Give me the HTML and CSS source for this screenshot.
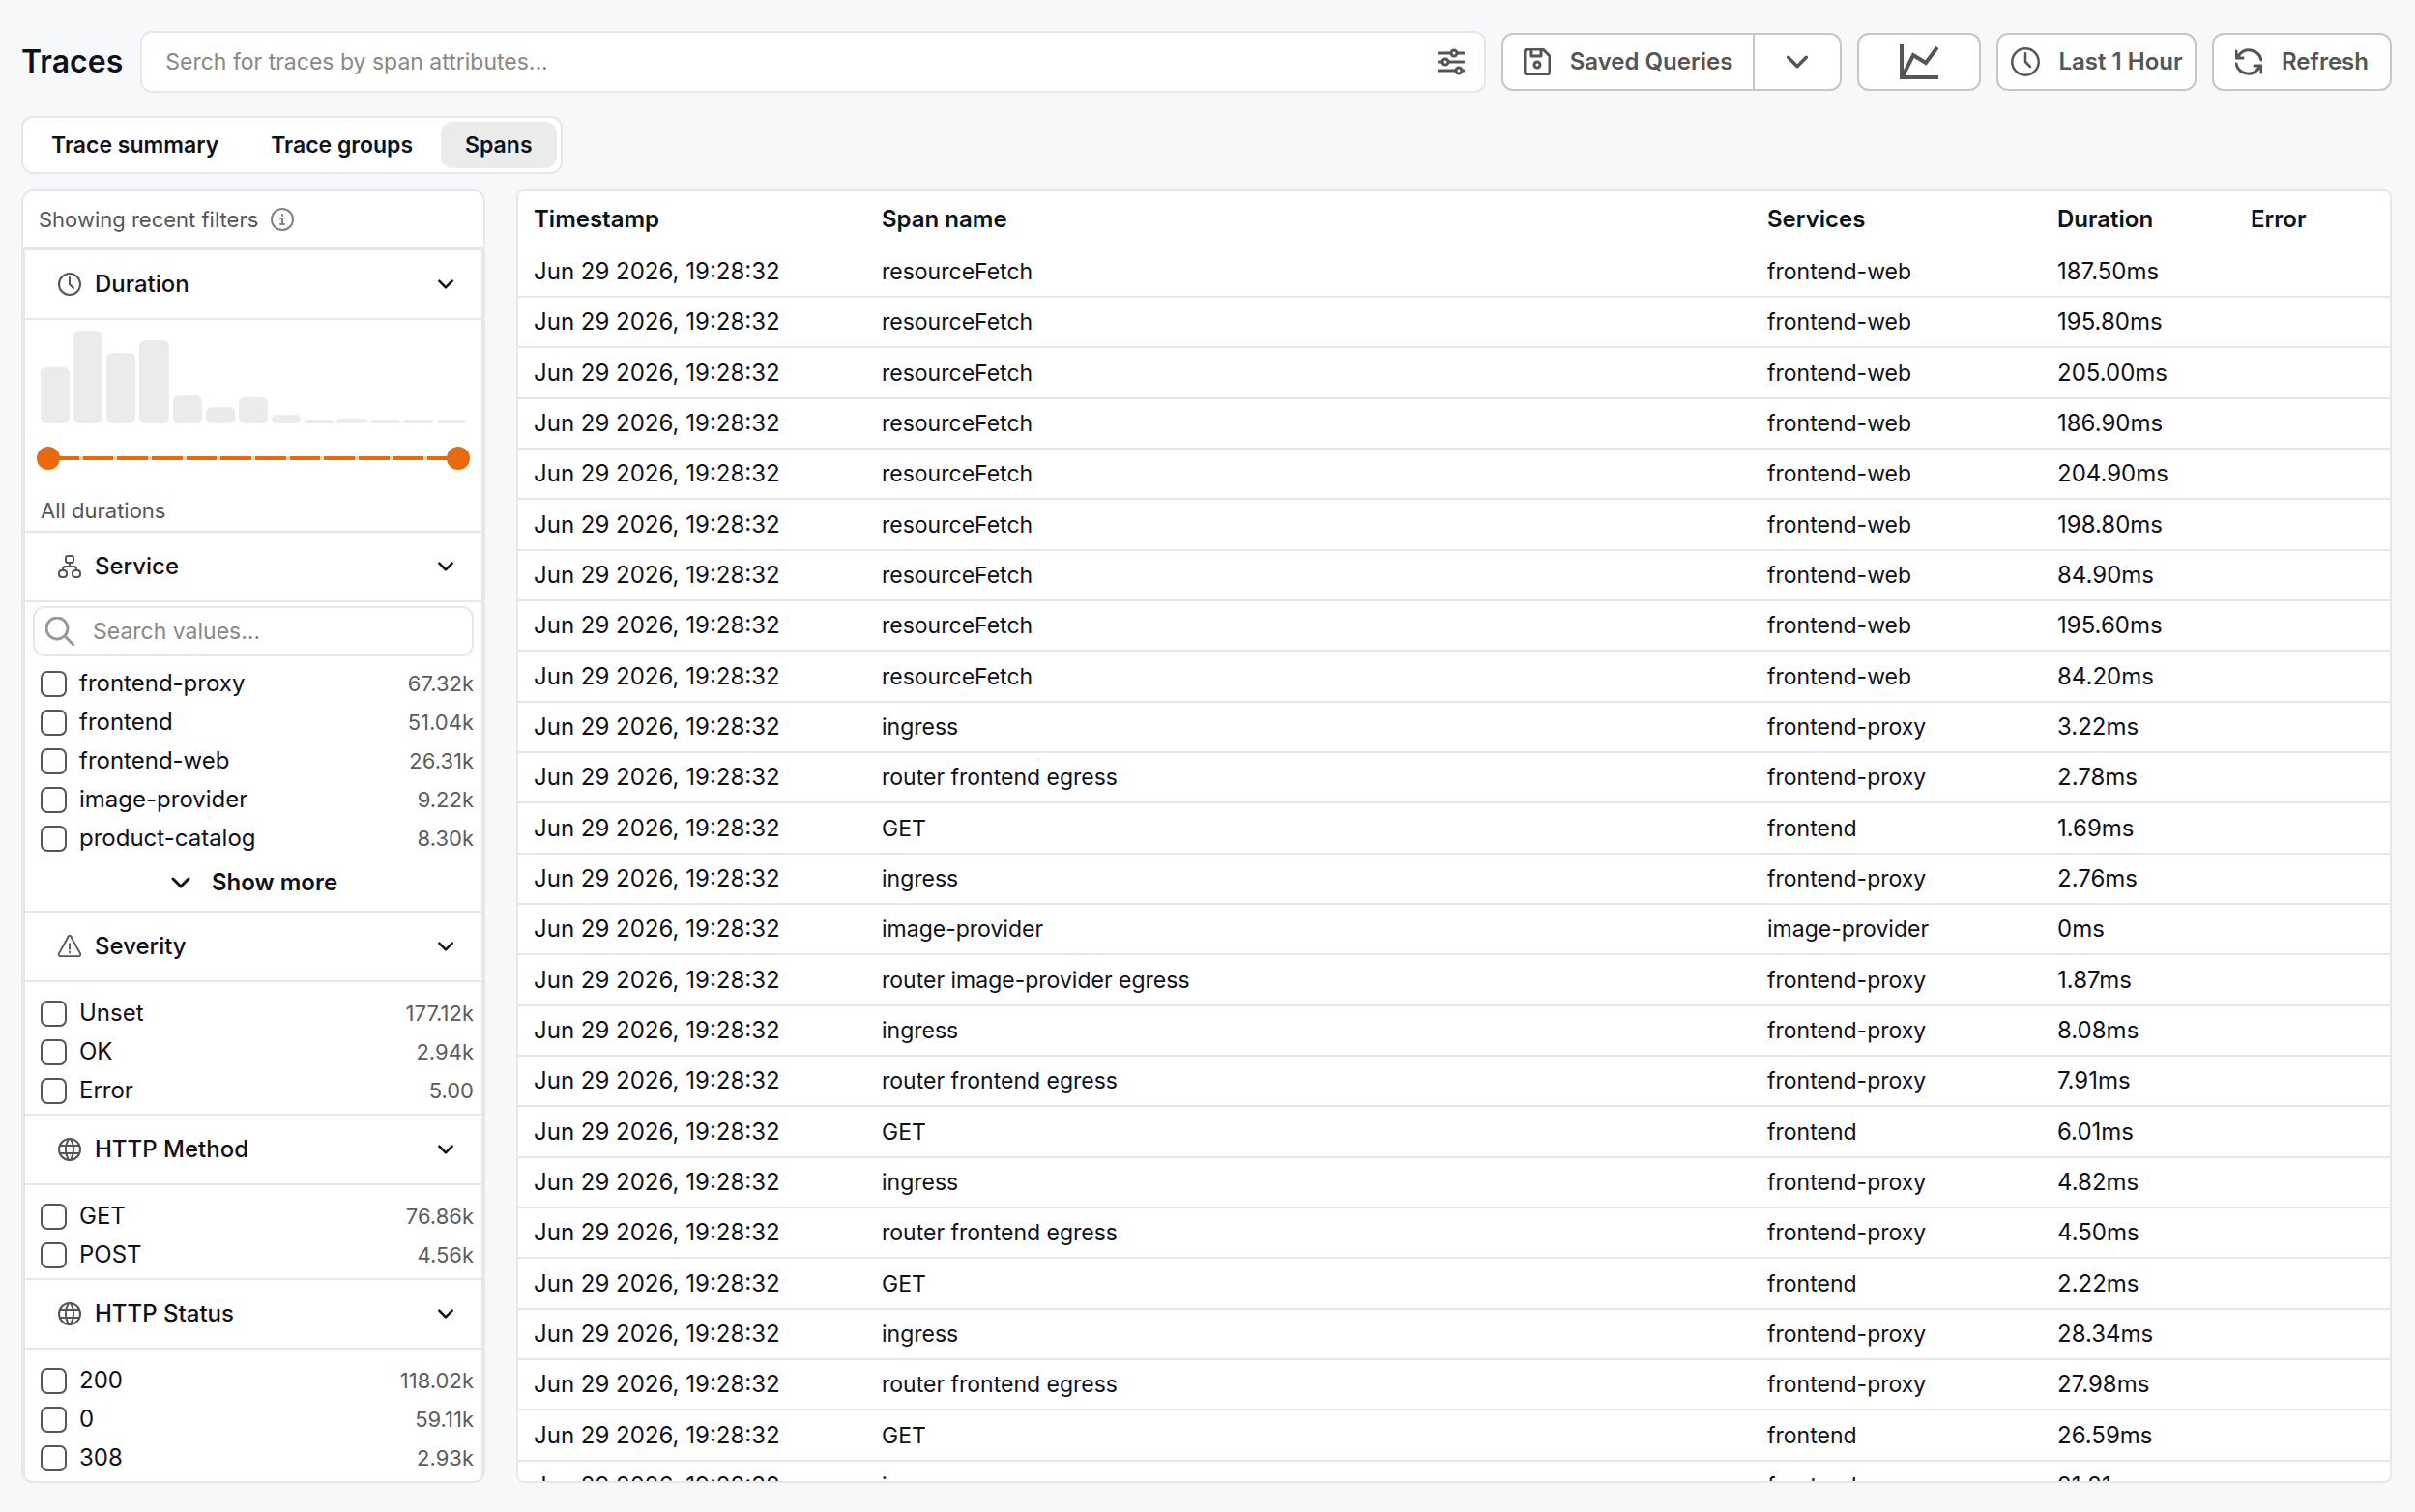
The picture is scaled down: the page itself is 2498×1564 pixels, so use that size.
FILE: index.html
```html
<!doctype html>
<html lang="en">
<head>
<meta charset="utf-8">
<title>Traces</title>
<link rel="stylesheet" href="styles.css">
</head>
<body>

<!-- shared icons -->
<svg class="sprite" aria-hidden="true">
  <symbol id="chevron" viewBox="0 0 24 24"><path d="M4 8l8 8 8-8"/></symbol>
  <symbol id="clock" viewBox="0 0 24 24"><circle cx="12" cy="12" r="11"/><path d="M12 5v7l4 4"/></symbol>
  <symbol id="globe" viewBox="0 0 24 24"><circle cx="12" cy="12" r="11"/><path d="M2 8h20M2 16h20M11 1a21 21 0 0 0 0 22M13 1a21 21 0 0 1 0 22"/></symbol>
</svg>

<header class="topbar">
  <h1>Traces</h1>
  <div class="search">
    <input type="text" placeholder="Serch for traces by span attributes..." aria-label="Search traces">
    <button type="button" class="search-options" aria-label="Search options">
      <svg class="icon" width="28" height="28" viewBox="0 0 28 28"><path d="M1 5h12M21 5h6M1 14h3M12 14h15M1 23h17M26 23h1"/><circle cx="17" cy="5" r="3"/><circle cx="8" cy="14" r="3"/><circle cx="22" cy="23" r="3"/></svg>
    </button>
  </div>
  <div class="btn-group">
    <button type="button" class="btn btn-saved">
      <svg class="icon" width="28" height="28" viewBox="0 0 28 28"><path d="M4 1h16l7 7v16a3 3 0 0 1-3 3H4a3 3 0 0 1-3-3V4a3 3 0 0 1 3-3zM8 1v7h10V1"/><circle cx="14" cy="17" r="3"/></svg>
      Saved Queries
    </button>
    <button type="button" class="btn btn-more" aria-label="More saved queries">
      <svg class="icon" width="28" height="28"><use href="#chevron"/></svg>
    </button>
  </div>
  <button type="button" class="btn btn-chart" aria-label="Chart">
    <svg class="icon icon-chart" width="40" height="36" viewBox="0 0 40 36"><path d="M2 0v34h38M3 33l11-22 13 8L39 3"/></svg>
  </button>
  <button type="button" class="btn btn-time">
    <svg class="icon" width="30" height="30"><use href="#clock"/></svg>
    Last 1 Hour
  </button>
  <button type="button" class="btn btn-refresh">
    <svg class="icon" width="28" height="28" viewBox="0 0 28 28"><path d="M27 12A13 13 0 0 0 4 7L1 10M1 3v7h7M1 16a13 13 0 0 0 23 5l3-3M27 25v-7h-7"/></svg>
    Refresh
  </button>
</header>

<nav class="tabs">
  <button type="button" class="tab">Trace summary</button>
  <button type="button" class="tab">Trace groups</button>
  <button type="button" class="tab active">Spans</button>
</nav>

<main class="content">
  <aside class="sidebar">
    <div class="recent">
      Showing recent filters
      <svg class="icon icon-info" width="24" height="24" viewBox="0 0 24 24"><circle cx="12" cy="12" r="11"/><path d="M10 11h2v6M10 17h4M12 7v1"/></svg>
    </div>

    <div class="filters">
      <section class="filter">
        <button type="button" class="filter-head">
          <svg class="icon" width="24" height="24"><use href="#clock"/></svg>
          Duration
          <svg class="icon chev" width="20" height="20"><use href="#chevron"/></svg>
        </button>
        <div class="duration">
          <div class="bars">
            <span style="height:58px"></span>
            <span style="height:96px"></span>
            <span style="height:73px"></span>
            <span style="height:86px"></span>
            <span style="height:29px"></span>
            <span style="height:17px"></span>
            <span style="height:27px"></span>
            <span style="height:9px"></span>
            <span style="height:4px"></span>
            <span style="height:5px"></span>
            <span style="height:4px"></span>
            <span style="height:4px"></span>
            <span style="height:4px"></span>
          </div>
          <div class="range">
            <div class="track">
              <i></i><i></i><i></i><i></i><i></i><i></i><i></i><i></i><i></i><i></i><i></i><i></i>
            </div>
            <input type="range" min="0" max="12" value="0" aria-label="Minimum duration">
            <input type="range" min="0" max="12" value="12" aria-label="Maximum duration">
          </div>
          <p>All durations</p>
        </div>
      </section>

      <section class="filter">
        <button type="button" class="filter-head">
          <svg class="icon" width="24" height="24" viewBox="0 0 24 24"><rect x="8" y="1" width="8" height="7" rx="2"/><rect x="1" y="16" width="8" height="7" rx="3"/><rect x="15" y="16" width="8" height="7" rx="3"/><path d="M12 8v4M5 16v-1a3 3 0 0 1 3-3h8a3 3 0 0 1 3 3v1"/></svg>
          Service
          <svg class="icon chev" width="20" height="20"><use href="#chevron"/></svg>
        </button>
        <div class="values-search">
          <svg class="icon" width="30" height="30" viewBox="0 0 30 30"><circle cx="12" cy="12" r="11"/><path d="M20 20l9 9"/></svg>
          <input type="text" placeholder="Search values..." aria-label="Search values">
        </div>
        <ul class="values">
          <li><label><input type="checkbox">frontend-proxy</label><span>67.32k</span></li>
          <li><label><input type="checkbox">frontend</label><span>51.04k</span></li>
          <li><label><input type="checkbox">frontend-web</label><span>26.31k</span></li>
          <li><label><input type="checkbox">image-provider</label><span>9.22k</span></li>
          <li><label><input type="checkbox">product-catalog</label><span>8.30k</span></li>
        </ul>
        <button type="button" class="show-more">
          <svg class="icon" width="24" height="24"><use href="#chevron"/></svg>
          Show more
        </button>
      </section>

      <section class="filter">
        <button type="button" class="filter-head">
          <svg class="icon" width="26" height="24" viewBox="0 0 26 24"><path d="M11 2L1 20a2 2 0 0 0 2 3h20a2 2 0 0 0 2-3L15 2a2 2 0 0 0-4 0zM13 9v6M13 18v1"/></svg>
          Severity
          <svg class="icon chev" width="20" height="20"><use href="#chevron"/></svg>
        </button>
        <ul class="values">
          <li><label><input type="checkbox">Unset</label><span>177.12k</span></li>
          <li><label><input type="checkbox">OK</label><span>2.94k</span></li>
          <li><label><input type="checkbox">Error</label><span>5.00</span></li>
        </ul>
      </section>

      <section class="filter">
        <button type="button" class="filter-head">
          <svg class="icon" width="24" height="24"><use href="#globe"/></svg>
          HTTP Method
          <svg class="icon chev" width="20" height="20"><use href="#chevron"/></svg>
        </button>
        <ul class="values">
          <li><label><input type="checkbox">GET</label><span>76.86k</span></li>
          <li><label><input type="checkbox">POST</label><span>4.56k</span></li>
        </ul>
      </section>

      <section class="filter">
        <button type="button" class="filter-head">
          <svg class="icon" width="24" height="24"><use href="#globe"/></svg>
          HTTP Status
          <svg class="icon chev" width="20" height="20"><use href="#chevron"/></svg>
        </button>
        <ul class="values">
          <li><label><input type="checkbox">200</label><span>118.02k</span></li>
          <li><label><input type="checkbox">0</label><span>59.11k</span></li>
          <li><label><input type="checkbox">308</label><span>2.93k</span></li>
        </ul>
      </section>
    </div>
  </aside>

  <div class="spans">
    <table>
      <thead>
        <tr>
          <th class="col-time">Timestamp</th>
          <th>Span name</th>
          <th class="col-service">Services</th>
          <th class="col-duration">Duration</th>
          <th class="col-error">Error</th>
        </tr>
      </thead>
      <tbody>
        <tr><td>Jun 29 2026, 19:28:32</td><td class="name">resourceFetch</td><td class="name">frontend-web</td><td>187.50ms</td><td></td></tr>
        <tr><td>Jun 29 2026, 19:28:32</td><td class="name">resourceFetch</td><td class="name">frontend-web</td><td>195.80ms</td><td></td></tr>
        <tr><td>Jun 29 2026, 19:28:32</td><td class="name">resourceFetch</td><td class="name">frontend-web</td><td>205.00ms</td><td></td></tr>
        <tr><td>Jun 29 2026, 19:28:32</td><td class="name">resourceFetch</td><td class="name">frontend-web</td><td>186.90ms</td><td></td></tr>
        <tr><td>Jun 29 2026, 19:28:32</td><td class="name">resourceFetch</td><td class="name">frontend-web</td><td>204.90ms</td><td></td></tr>
        <tr><td>Jun 29 2026, 19:28:32</td><td class="name">resourceFetch</td><td class="name">frontend-web</td><td>198.80ms</td><td></td></tr>
        <tr><td>Jun 29 2026, 19:28:32</td><td class="name">resourceFetch</td><td class="name">frontend-web</td><td>84.90ms</td><td></td></tr>
        <tr><td>Jun 29 2026, 19:28:32</td><td class="name">resourceFetch</td><td class="name">frontend-web</td><td>195.60ms</td><td></td></tr>
        <tr><td>Jun 29 2026, 19:28:32</td><td class="name">resourceFetch</td><td class="name">frontend-web</td><td>84.20ms</td><td></td></tr>
        <tr><td>Jun 29 2026, 19:28:32</td><td class="name">ingress</td><td class="name">frontend-proxy</td><td>3.22ms</td><td></td></tr>
        <tr><td>Jun 29 2026, 19:28:32</td><td class="name">router frontend egress</td><td class="name">frontend-proxy</td><td>2.78ms</td><td></td></tr>
        <tr><td>Jun 29 2026, 19:28:32</td><td class="name">GET</td><td class="name">frontend</td><td>1.69ms</td><td></td></tr>
        <tr><td>Jun 29 2026, 19:28:32</td><td class="name">ingress</td><td class="name">frontend-proxy</td><td>2.76ms</td><td></td></tr>
        <tr><td>Jun 29 2026, 19:28:32</td><td class="name">image-provider</td><td class="name">image-provider</td><td>0ms</td><td></td></tr>
        <tr><td>Jun 29 2026, 19:28:32</td><td class="name">router image-provider egress</td><td class="name">frontend-proxy</td><td>1.87ms</td><td></td></tr>
        <tr><td>Jun 29 2026, 19:28:32</td><td class="name">ingress</td><td class="name">frontend-proxy</td><td>8.08ms</td><td></td></tr>
        <tr><td>Jun 29 2026, 19:28:32</td><td class="name">router frontend egress</td><td class="name">frontend-proxy</td><td>7.91ms</td><td></td></tr>
        <tr><td>Jun 29 2026, 19:28:32</td><td class="name">GET</td><td class="name">frontend</td><td>6.01ms</td><td></td></tr>
        <tr><td>Jun 29 2026, 19:28:32</td><td class="name">ingress</td><td class="name">frontend-proxy</td><td>4.82ms</td><td></td></tr>
        <tr><td>Jun 29 2026, 19:28:32</td><td class="name">router frontend egress</td><td class="name">frontend-proxy</td><td>4.50ms</td><td></td></tr>
        <tr><td>Jun 29 2026, 19:28:32</td><td class="name">GET</td><td class="name">frontend</td><td>2.22ms</td><td></td></tr>
        <tr><td>Jun 29 2026, 19:28:32</td><td class="name">ingress</td><td class="name">frontend-proxy</td><td>28.34ms</td><td></td></tr>
        <tr><td>Jun 29 2026, 19:28:32</td><td class="name">router frontend egress</td><td class="name">frontend-proxy</td><td>27.98ms</td><td></td></tr>
        <tr><td>Jun 29 2026, 19:28:32</td><td class="name">GET</td><td class="name">frontend</td><td>26.59ms</td><td></td></tr>
        <tr><td>Jun 29 2026, 19:28:32</td><td class="name">ingress</td><td class="name">frontend-proxy</td><td>21.21ms</td><td></td></tr>
      </tbody>
    </table>
  </div>
</main>

</body>
</html>
```
FILE: styles.css
```css
* {
    box-sizing: border-box;
}
body {
    display: flex;
    flex-direction: column;
    height: 100vh;
    margin: 0;
    padding: 32px 24px 30px 22px;
    background: #f7f8fa;
    color: #0f111a;
    font-family: Inter, "Liberation Sans", sans-serif;
    font-size: 24px;
    line-height: 32px;
}
h1, p, ul {
    margin: 0;
    padding: 0;
}
button, input {
    font: inherit;
    color: inherit;
}
button {
    margin: 0;
    padding: 0;
    border: 0;
    background: none;
    cursor: pointer;
}
.sprite {
    display: none;
}
.icon {
    flex: none;
    fill: none;
    stroke: currentColor;
    stroke-width: 2px;
    stroke-linecap: round;
    stroke-linejoin: round;
}

/* top bar */
.topbar {
    display: flex;
    align-items: center;
    gap: 16px;
}
h1 {
    padding-right: 2px;
    font-size: 32px;
    font-weight: 600;
}
.search {
    display: flex;
    flex: 1;
    align-items: center;
    height: 64px;
    padding: 0 20px 0 24px;
    border: 2px solid #e5e7ee;
    border-radius: 12px;
    background: #fff;
}
.search input {
    flex: 1;
    min-width: 0;
    padding: 0;
    border: 0;
    outline: 0;
    background: none;
    font-size: 23px;
}
::placeholder {
    color: #8a8883;
    opacity: 1;
}
.search-options {
    display: flex;
    color: #555;
}
.search-options .icon,
.btn .icon {
    stroke-width: 3px;
}
.btn,
.btn-group {
    display: flex;
    align-items: center;
    height: 60px;
    border: 2px solid #c6c6c6;
    border-radius: 12px;
    background: #fff;
}
.btn {
    justify-content: center;
    gap: 20px;
    color: #555;
    font-size: 24px;
    font-weight: 600;
    white-space: nowrap;
}
.btn-group .btn {
    height: 56px;
    border: 0;
    background: none;
}
.btn-saved {
    width: 258px;
}
.btn-group .btn-more {
    width: 90px;
    border-left: 2px solid #c6c6c6;
    border-radius: 0;
}
.btn-chart {
    width: 128px;
}
.btn .icon-chart {
    stroke-width: 4px;
    stroke-linecap: butt;
    stroke-linejoin: miter;
}
.btn-time {
    width: 207px;
}
.btn-time .icon {
    stroke-width: 2px;
}
.btn-refresh {
    width: 186px;
}

/* tabs */
.tabs {
    display: flex;
    align-self: flex-start;
    gap: 4px;
    margin: 24px 0 16px;
    padding: 4px;
    border: 2px solid #e5e7ec;
    border-radius: 12px;
    background: #fff;
}
.tab {
    height: 48px;
    padding: 0 25px;
    border-radius: 12px;
    font-size: 23px;
    font-weight: 600;
}
.tab.active {
    background: #ebebeb;
}

.content {
    display: flex;
    flex: 1;
    gap: 32px;
    min-height: 0;
}

/* sidebar */
.sidebar {
    flex: none;
    width: 480px;
    overflow: hidden;
    border: 2px solid #e5e7ec;
    border-radius: 12px;
    background: #fff;
}
.recent {
    display: flex;
    align-items: center;
    gap: 13px;
    height: 59px;
    padding: 0 16px;
    border-bottom: 2px solid #e5e7ec;
    color: #555;
    font-size: 22px;
}
.icon-info {
    color: #858279;
}
.filters {
    height: 100%;
    border: 2px solid #e5e7ec;
    border-bottom: 0;
}
.filter + .filter {
    border-top: 2px solid #e5e7ec;
}
.filter-head {
    display: flex;
    align-items: center;
    gap: 14px;
    width: 100%;
    height: 72px;
    padding: 0 27px 0 34px;
    border-bottom: 2px solid #e5e7ec;
    font-weight: 500;
}
.filter-head .icon {
    width: 24px;
    color: #555;
}
.filter-head .chev {
    width: 20px;
    margin-left: auto;
    color: #0f111a;
    stroke-width: 3px;
}
.duration {
    padding: 11px 12px 7px;
}
.bars {
    display: flex;
    align-items: flex-end;
    gap: 4px;
    height: 96px;
    margin: 0 4px;
}
.bars span {
    flex: 1;
    border-radius: 6px;
    background: #ebebeb;
}
.range {
    position: relative;
    height: 24px;
    margin: 24px 0 28px;
    padding: 10px 12px;
}
.track {
    display: flex;
    gap: 4px;
    height: 4px;
    background: #fbd7b9;
}
.track i {
    flex: 1;
    background: #e96a0c;
}
.range input {
    position: absolute;
    inset: 0;
    width: 100%;
    margin: 0;
    background: none;
    appearance: none;
    pointer-events: none;
}
.range input::-webkit-slider-thumb {
    width: 24px;
    height: 24px;
    border-radius: 50%;
    background: #e96a0c;
    appearance: none;
    pointer-events: auto;
}
.duration p {
    padding-left: 4px;
    color: #555;
    font-size: 22px;
    line-height: 28px;
}
.values-search {
    display: flex;
    align-items: center;
    gap: 19px;
    height: 52px;
    margin: 4px 8px 8px;
    padding: 0 11px;
    border: 2px solid #e5e7ec;
    border-radius: 12px;
    color: #999;
}
.values-search .icon {
    stroke-width: 3px;
}
.values-search input {
    flex: 1;
    min-width: 0;
    padding: 0;
    border: 0;
    outline: 0;
    background: none;
    color: #0f111a;
    font-size: 23px;
}
.values {
    padding: 12px 8px 4px 16px;
    list-style: none;
}
.values-search + .values {
    padding-top: 0;
    padding-bottom: 0;
}
.values li {
    display: flex;
    align-items: center;
    justify-content: space-between;
    height: 40px;
}
.values label {
    display: flex;
    align-items: center;
    gap: 13px;
}
.values span {
    color: #5c5c5c;
    font-size: 22px;
}
.values input {
    width: 27px;
    height: 27px;
    margin: 0;
    border: 2px solid #555;
    border-radius: 7px;
    background: #fff;
    appearance: none;
}
.show-more {
    display: flex;
    align-items: center;
    justify-content: center;
    gap: 20px;
    width: 100%;
    height: 52px;
    margin-bottom: 3px;
    font-weight: 600;
}
.show-more .icon {
    stroke-width: 3px;
}

/* spans table */
.spans {
    flex: 1;
    min-width: 0;
    overflow: hidden;
    border: 2px solid #e5e7ea;
    border-radius: 8px;
    background: #fff;
}
table {
    width: 100%;
    border-spacing: 0;
    table-layout: fixed;
}
th, td {
    height: 52px;
    padding: 0 16px;
    border-bottom: 2px solid #e5e7ea;
    text-align: left;
    white-space: nowrap;
}
th {
    height: 58px;
    border-bottom: 0;
    font-weight: 600;
}
tbody tr:nth-child(3n) td {
    height: 53px;
}
.name {
    font-size: 23px;
}
.col-time {
    width: 360px;
}
.col-service {
    width: 300px;
}
.col-duration {
    width: 200px;
}
.col-error {
    width: 160px;
}
```
